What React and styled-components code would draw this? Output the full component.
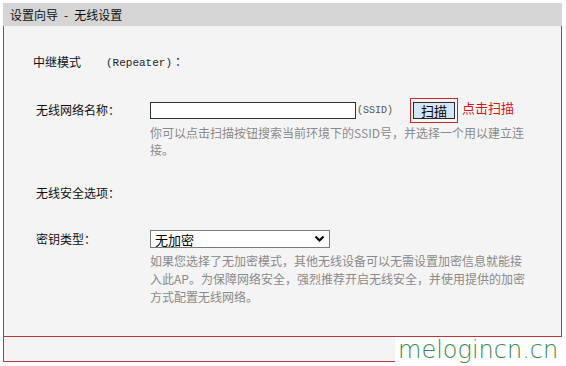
import React from 'react';
import styled, { createGlobalStyle } from 'styled-components';

const Global = createGlobalStyle`
    body {
        margin: 0;
        background: #fff;
        font-family: "Noto Sans CJK SC", sans-serif;
        font-size: 12px;
        color: #111;
    }
`;

const Screen = styled.div`
    position: relative;
    width: 566px;
    height: 366px;
    overflow: hidden;
    padding: 3px 0 0 3px;
    box-sizing: border-box;
`;

const Header = styled.div`
    width: 559px;
    height: 23px;
    background: #d5d5d5;
    padding-left: 7px;
    box-sizing: border-box;
    display: flex;
    align-items: center;
    font-size: 12px;
    color: #111;
`;

const Dash = styled.span`
    margin: 0 6px;
`;

const Body = styled.div`
    width: 559px;
    height: 311px;
    box-sizing: border-box;
    background: #f4f4f4;
    border: 1px solid #b8363c;
    border-top: none;
    padding-left: 32px;
    display: flex;
    flex-direction: column;
`;

const Footer = styled.div`
    width: 559px;
    height: 25px;
    box-sizing: border-box;
    background: #f4f4f4;
    border: 1px solid #b8363c;
    border-top: none;
`;

const Field = styled.div`
    display: flex;
    align-items: center;
    height: ${p => p.h}px;
    margin-top: ${p => p.top}px;
`;

const Label = styled.div`
    flex: none;
    width: ${p => (p.short ? 'auto' : '114px')};
    margin-left: ${p => (p.shift ? '-3px' : '0')};
    font-size: 12px;
    line-height: 16px;
    color: #111;
`;

const Mode = styled.div`
    margin-left: 25px;
    font-size: 12px;
    line-height: 16px;
    color: #222;
`;

const Mono = styled.span`
    font-family: "Liberation Mono", monospace;
    font-size: 11px;
    margin-right: 3px;
`;

const TextInput = styled.input`
    width: 206px;
    height: 17px;
    box-sizing: border-box;
    margin: 1px 0 0;
    padding: 0 2px;
    border: 1px solid #2a3232;
    background: #fff;
    outline: none;
`;

const Unit = styled.span`
    margin-left: 1px;
    font-family: "Liberation Mono", monospace;
    font-size: 10px;
    color: #555;
`;

const Highlight = styled.div`
    margin-left: 17px;
    width: 48px;
    height: 25px;
    box-sizing: border-box;
    border: 1px solid #c8262c;
    display: flex;
    align-items: center;
    justify-content: center;
    padding-top: 1px;
`;

const ScanButton = styled.button`
    width: 42px;
    height: 17px;
    box-sizing: border-box;
    padding: 0;
    margin: 0;
    border: 1px solid #2b2b2b;
    background: #d6e5f8;
    font-family: "Noto Sans CJK SC", sans-serif;
    font-size: 13px;
    line-height: 15px;
    color: #000;
`;

const Tip = styled.span`
    margin-left: 4px;
    margin-top: -6px;
    font-size: 13px;
    color: #d8141c;
`;

const Help = styled.div`
    margin-left: 114px;
    margin-top: ${p => p.top}px;
    width: 378px;
    font-size: 12px;
    line-height: ${p => p.lh}px;
    color: #8a8a8a;
`;

const Select = styled.div`
    width: 180px;
    height: 18px;
    box-sizing: border-box;
    border: 1px solid #7a7a7a;
    background: #fff;
    display: flex;
    align-items: center;
    justify-content: space-between;
    padding: 0 4px 0 4px;
    font-size: 13px;
    color: #000;
`;

const Watermark = styled.div`
    position: absolute;
    right: 0;
    bottom: 0;
    width: 171px;
    height: 29px;
    background: #fff;
    font-family: "DejaVu Sans", sans-serif;
    font-weight: 200;
    font-size: 24px;
    line-height: 27px;
    color: #3b8a4c;
    padding-left: 3px;
    box-sizing: border-box;
    white-space: nowrap;
`;

function Chevron() {
    return (
        <svg width="11" height="8" viewBox="0 0 11 8">
            <path d="M1.5 1.5 L5.5 5.5 L9.5 1.5" fill="none" stroke="#000" strokeWidth="2.2" />
        </svg>
    );
}

export default function App() {
    return (
        <Screen>
            <Global />
            <Header>设置向导<Dash>-</Dash>无线设置</Header>
            <Body>
                <Field top={28} h={16}>
                    <Label short shift>中继模式</Label>
                    <Mode><Mono>(Repeater)</Mono>：</Mode>
                </Field>
                <Field top={27} h={26}>
                    <Label>无线网络名称：</Label>
                    <TextInput />
                    <Unit>(SSID)</Unit>
                    <Highlight>
                        <ScanButton>扫描</ScanButton>
                    </Highlight>
                    <Tip>点击扫描</Tip>
                </Field>
                <Help top={1} lh={17}>
                    你可以点击扫描按钮搜索当前环境下的SSID号，并选择一个用以建立连接。
                </Help>
                <Field top={27} h={16}>
                    <Label>无线安全选项：</Label>
                </Field>
                <Field top={29} h={18}>
                    <Label>密钥类型：</Label>
                    <Select>
                        <span>无加密</span>
                        <Chevron />
                    </Select>
                </Field>
                <Help top={4} lh={18}>
                    如果您选择了无加密模式，其他无线设备可以无需设置加密信息就能接入此AP。为保障网络安全，强烈推荐开启无线安全，并使用提供的加密方式配置无线网络。
                </Help>
            </Body>
            <Footer />
            <Watermark>melogincn.cn</Watermark>
        </Screen>
    );
}
